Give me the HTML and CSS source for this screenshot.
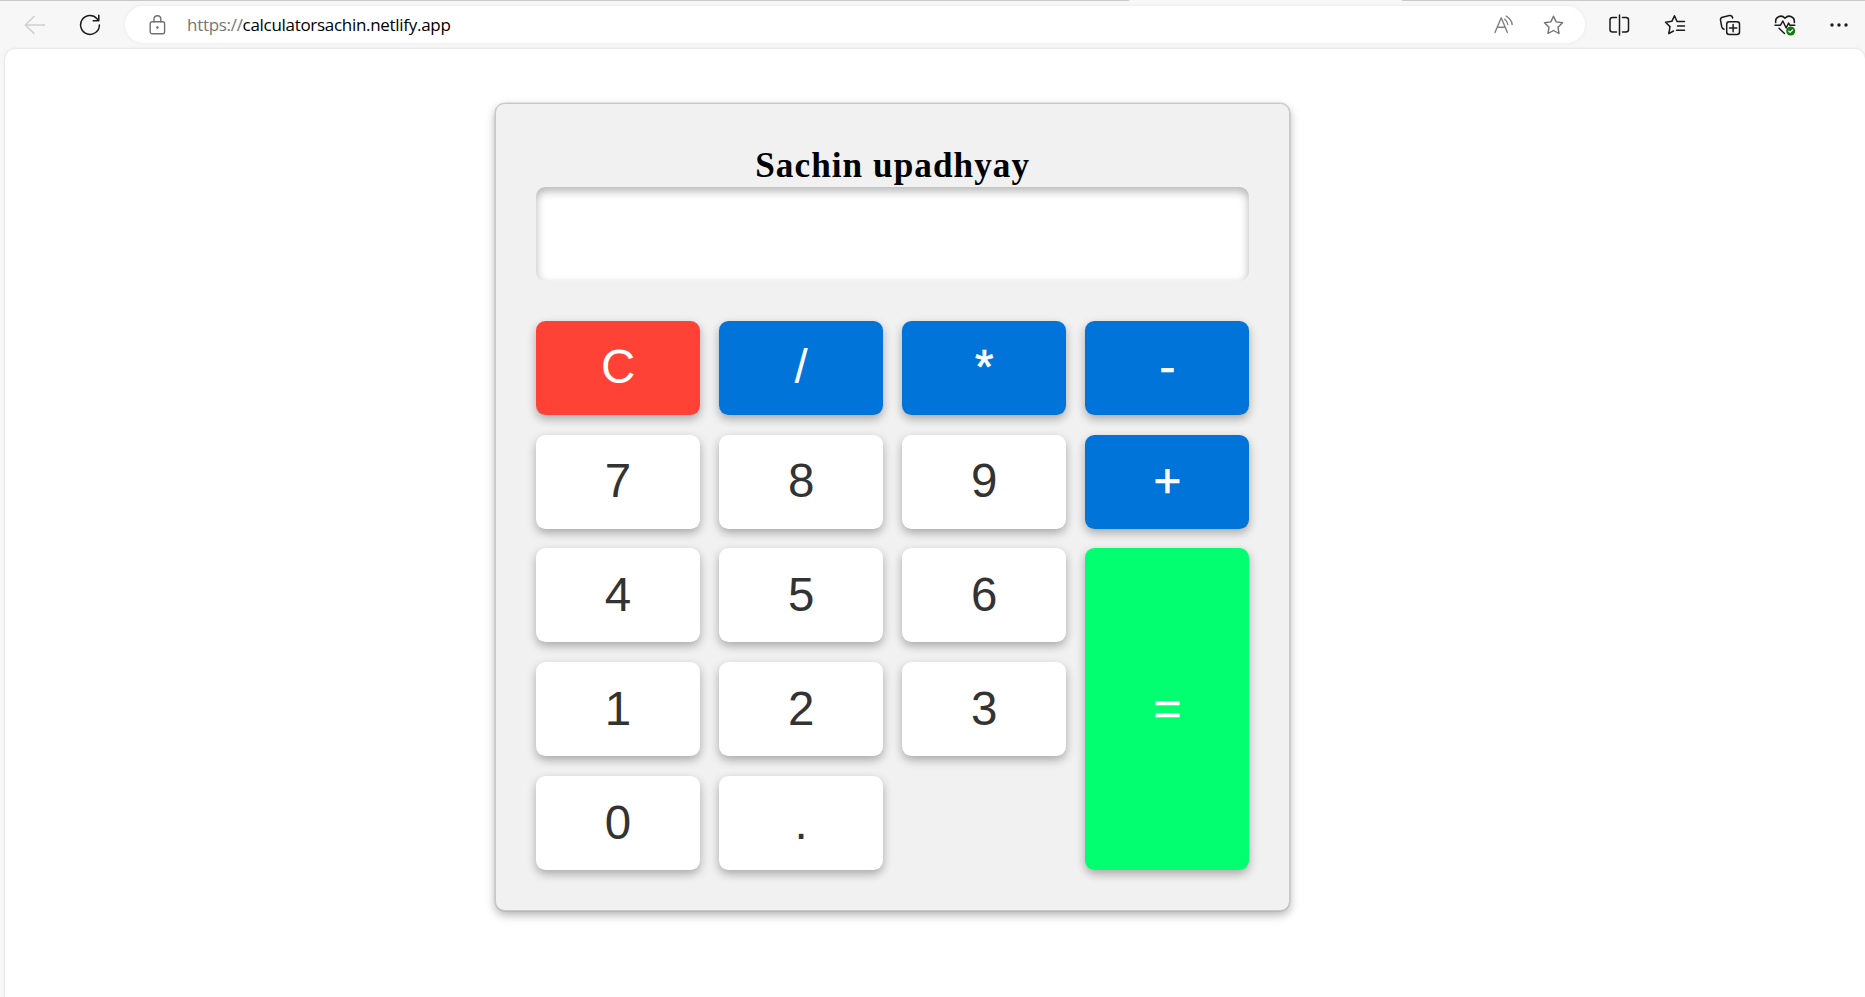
FILE: index.html
```html
<!DOCTYPE html>
<html lang="en">
<head>
<meta charset="utf-8">
<title>Calculator</title>
<link rel="stylesheet" href="styles.css">
</head>
<body>
<header class="toolbar">
  <svg class="icon back" width="22" height="20" viewBox="0 0 22 20"><path d="M20.5 10H1.5M10 1.5 1.3 10l8.700 8.500"/></svg>
  <svg class="icon reload" width="22" height="22" viewBox="0 0 22 22"><path d="M20.400 11a9.400 9.400 0 1 1-2.400-6.300l1.500 1.800M19.800 1.200v5.600h-5.600"/></svg>
  <div class="address">
    <svg class="icon lock" width="17" height="20" viewBox="0 0 17 20"><rect x="1.200" y="6.800" width="14.400" height="12" rx="2"/><path d="M5 6.800V4.200a3.400 3.400 0 0 1 6.800 0v2.600"/><circle class="dot" cx="8.400" cy="12.600" r="1.300"/></svg>
    <span class="url"><span class="scheme">https://</span>calculatorsachin.netlify.app</span>
    <svg class="icon read" width="20" height="19" viewBox="0 0 20 19"><path d="M1 17.500 7.200 2.800l6.200 14.700M3.300 12.200h7.800M10.700 4.200q2.700 2 3.100 5.300M12.200 1.200q5 2.800 6 8.300"/></svg>
    <svg class="icon star" width="21" height="20" viewBox="0 0 21 20"><path d="m10.500 1.200 2.700 5.700 6.300.9-4.500 4.400 1 6.300-5.500-3-5.500 3 1-6.300-4.500-4.400 6.300-.9z"/></svg>
  </div>
  <div class="actions">
    <svg class="icon" width="22" height="22" viewBox="0 0 22 22"><path d="M11.500 1v20M8.500 3.500H4.500a2.500 2.500 0 0 0-2.500 2.500v9.500A2.500 2.500 0 0 0 4.500 18h4M14.500 3.500h3.500a2.500 2.500 0 0 1 2.500 2.500v9.500a2.500 2.500 0 0 1-2.500 2.500h-3.500"/></svg>
    <svg class="icon" width="22" height="22" viewBox="0 0 22 22"><path d="M20.500 7.500H13L10.500 1.800 7.800 7.300 1.500 8.200 6 12.600l-1.200 7.100L9.500 17M13.500 12h7M12.500 16.300h8"/></svg>
    <svg class="icon" width="22" height="22" viewBox="0 0 22 22"><rect x="7.700" y="7.700" width="12.800" height="12.800" rx="2.500"/><path d="M14.100 10.500v7.200M10.500 14.100h7.200M5 15.200q-1.800-.5-2.200-2.200L1.500 6.200Q1.200 4 3.400 3.200L10.500 1.500q2.500-.3 3.200 2.500"/></svg>
    <svg class="icon health" width="22" height="22" viewBox="0 0 22 22"><path d="M1.700 8.500C.8 3.200 7.200-.2 11 4.300 14.800-.2 21.200 3.200 20.300 8.500M1 11.200h5.500l2.300-4.200 3.400 7 2.400-5 1.200 2.200h5M5 14.200l5.500 5.300"/><circle class="badge" cx="16.700" cy="17" r="4.500"/><path class="tick" d="m14.800 17.200 1.300 1.200 2.600-2.600"/></svg>
    <svg class="more" width="18" height="4" viewBox="0 0 18 4"><circle cx="2" cy="2" r="1.700"/><circle cx="9" cy="2" r="1.700"/><circle cx="16" cy="2" r="1.700"/></svg>
  </div>
</header>
<main class="page">
  <section class="calculator">
    <h3 class="title">Sachin upadhyay</h3>
    <div class="screen"></div>
    <div class="keys">
      <button class="key clear">C</button>
      <button class="key op">/</button>
      <button class="key op bold">*</button>
      <button class="key op bold">-</button>
      <button class="key">7</button>
      <button class="key">8</button>
      <button class="key">9</button>
      <button class="key op bold">+</button>
      <button class="key">4</button>
      <button class="key">5</button>
      <button class="key">6</button>
      <button class="key equals bold">=</button>
      <button class="key">1</button>
      <button class="key">2</button>
      <button class="key">3</button>
      <button class="key">0</button>
      <button class="key">.</button>
    </div>
  </section>
</main>
</body>
</html>
```
FILE: styles.css
```css
* { box-sizing: border-box; }
body {
  margin: 0;
  height: 997px;
  overflow: hidden;
  display: flex;
  flex-direction: column;
  background: #f7f7f7;
}
/* The top rule is open under the active tab. */
.toolbar {
  flex: none;
  height: 49px;
  background: linear-gradient(to right, #c9c9c9 1128px, #f7f7f7 1130px, #f7f7f7 1401px, #c9c9c9 1403px) top / 100% 1px no-repeat;
  display: flex;
  align-items: center;
  padding-left: 24px;
}
.icon {
  flex: none;
  fill: none;
  stroke: #1b1b1b;
  stroke-width: 1.5;
  stroke-linecap: round;
  stroke-linejoin: round;
}
.back { stroke: #cfcfcf; }
.reload { margin-left: 33px; }
.address {
  margin-left: 24px;
  width: 1460px;
  height: 37px;
  border-radius: 19px;
  background: #fff;
  box-shadow: 0 0 4px rgba(0, 0, 0, 0.06);
  display: flex;
  align-items: center;
  padding: 0 21px 0 24px;
}
.address .icon { stroke: #707070; stroke-width: 1.4; }
.address .dot { fill: #707070; stroke: none; }
.url {
  flex: 1;
  margin-left: 21px;
  font: 17px/24px "Open Sans", sans-serif;
  letter-spacing: -0.3px;
  color: #000;
}
.scheme { color: #767676; }
.address .read { stroke: #808080; }
.star { margin-left: 29px; }
.actions {
  display: flex;
  align-items: center;
  gap: 33.5px;
  margin-left: 23px;
}
.health { margin-left: -1px; }
.badge { fill: #107c10; stroke: none; }
.tick { stroke: #fff; stroke-width: 1.2; }
.more { margin-left: 1px; fill: #1b1b1b; }
.page {
  flex: 1;
  margin-left: 5px;
  padding: 54px 0 0 490px;
  background: #fff;
  border-radius: 10px 10px 0 0;
  box-shadow: 0 0 3px rgba(0, 0, 0, 0.15);
}
.calculator {
  width: 795.4px;
  height: 808px;
  padding: 40px;
  border: 1px solid #c8c8c8;
  border-radius: 9.5px;
  background: #f1f1f1;
  box-shadow: 0 4px 9.5px rgba(0, 0, 0, 0.3), 0 0 0 0.5px #ddd;
}
.title {
  margin: 0;
  height: 43px;
  font: bold 35.2px/43px "Liberation Serif", serif;
  letter-spacing: 1.05px;
  text-align: center;
  color: #000;
}
.screen {
  height: 94px;
  border-radius: 9.5px;
  background: #fff;
  box-shadow: inset 0 4px 9.5px rgba(0, 0, 0, 0.3);
}
.keys {
  margin-top: 39.7px;
  display: grid;
  grid-template-columns: repeat(4, 1fr);
  grid-auto-rows: 94px;
  gap: 19.9px 19px;
}
.key {
  border: 0;
  padding: 0 0 2px;
  border-radius: 9.5px;
  background: #fff;
  color: #333;
  font: 47.5px "Liberation Sans", Arial, sans-serif;
  box-shadow: 0 4px 9.5px rgba(0, 0, 0, 0.3);
}
.op { background: #0074d9; color: #fff; }
.clear { background: #ff4136; color: #fff; }
.equals { grid-row: span 3; background: #01ff70; color: #fff; }
.bold { -webkit-text-stroke: 0.7px #fff; }
```
